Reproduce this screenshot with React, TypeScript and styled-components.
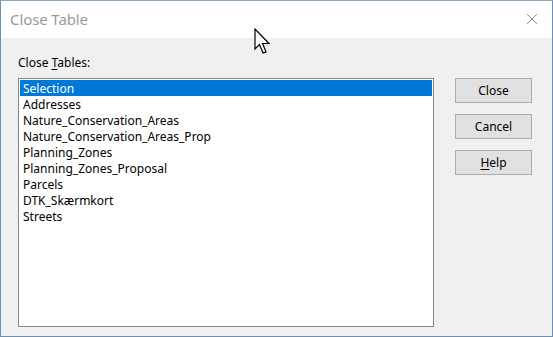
import styled, { createGlobalStyle } from "styled-components";

const GlobalStyle = createGlobalStyle`
  html, body {
    margin: 0;
    padding: 0;
    background: #f0f0f0;
  }
  body {
    font-family: "Segoe UI", "Noto Sans", "Liberation Sans", sans-serif;
  }
`;

const DialogWindow = styled.div`
  position: relative;
  box-sizing: border-box;
  width: 553px;
  height: 337px;
  display: flex;
  flex-direction: column;
  background: #f0f0f0;
  border: 1px solid #6f8fae;
  border-top-color: #8aa6c0;
  overflow: hidden;
`;

const TitleBar = styled.div`
  height: 37px;
  flex-shrink: 0;
  display: flex;
  align-items: center;
  justify-content: space-between;
  background: #ffffff;
  padding: 0 14px 0 9px;
`;

const TitleText = styled.span`
  font-size: 15px;
  color: #9a9a9a;
  letter-spacing: -0.1px;
  margin-top: -1px;
`;

const CloseGlyph = styled.svg`
  width: 12px;
  height: 12px;
  margin-top: -2px;
`;

const Body = styled.div`
  flex: 1;
  display: flex;
  gap: 21px;
  padding: 17px 20px 9px 17px;
  min-height: 0;
`;

const ListColumn = styled.div`
  width: 416px;
  display: flex;
  flex-direction: column;
`;

const FieldLabel = styled.label`
  font-size: 12px;
  color: #000;
  height: 16px;
  line-height: 16px;
  margin-bottom: 7px;
`;

const Mnemonic = styled.span`
  text-decoration: underline;
  text-underline-offset: 2px;
`;

const ListBox = styled.div`
  flex: 1;
  box-sizing: border-box;
  background: #ffffff;
  border: 1px solid #828790;
  padding: 1px;
  display: flex;
  flex-direction: column;
`;

const ListItem = styled.div<{ $selected?: boolean }>`
  height: 16px;
  line-height: 17px;
  font-size: 12px;
  padding-left: 3px;
  white-space: nowrap;
  color: ${(p) => (p.$selected ? "#ffffff" : "#000000")};
  background: ${(p) => (p.$selected ? "#0078d7" : "transparent")};
`;

const ButtonColumn = styled.div`
  display: flex;
  flex-direction: column;
  gap: 11px;
  padding-top: 23px;
`;

const DialogButton = styled.button`
  box-sizing: border-box;
  width: 77px;
  height: 25px;
  background: #e1e1e1;
  border: 1px solid #adadad;
  font-family: inherit;
  font-size: 12px;
  color: #000;
  padding: 0;
  cursor: default;
`;

const Pointer = styled.svg`
  position: absolute;
  left: 253px;
  top: 27px;
  width: 18px;
  height: 27px;
`;

const tables = [
  "Selection",
  "Addresses",
  "Nature_Conservation_Areas",
  "Nature_Conservation_Areas_Prop",
  "Planning_Zones",
  "Planning_Zones_Proposal",
  "Parcels",
  "DTK_Skærmkort",
  "Streets",
];

export default function App() {
  return (
    <>
      <GlobalStyle />
      <DialogWindow>
        <TitleBar>
          <TitleText>Close Table</TitleText>
          <CloseGlyph viewBox="0 0 12 12">
            <path d="M1 1 L11 11 M11 1 L1 11" stroke="#8c8c8c" strokeWidth="1" fill="none" />
          </CloseGlyph>
        </TitleBar>
        <Body>
          <ListColumn>
            <FieldLabel>
              Close <Mnemonic>T</Mnemonic>ables:
            </FieldLabel>
            <ListBox>
              {tables.map((t, i) => (
                <ListItem key={t} $selected={i === 0}>
                  {t}
                </ListItem>
              ))}
            </ListBox>
          </ListColumn>
          <ButtonColumn>
            <DialogButton>Close</DialogButton>
            <DialogButton>Cancel</DialogButton>
            <DialogButton>
              <Mnemonic>H</Mnemonic>elp
            </DialogButton>
          </ButtonColumn>
        </Body>
        <Pointer viewBox="0 0 18 27">
          <path
            d="M1 1 L1 21 L5.5 16.5 L9 25 L12 23.8 L8.6 15.5 L15 15.5 Z"
            fill="#ffffff"
            stroke="#000000"
            strokeWidth="1.2"
            strokeLinejoin="miter"
          />
        </Pointer>
      </DialogWindow>
    </>
  );
}
